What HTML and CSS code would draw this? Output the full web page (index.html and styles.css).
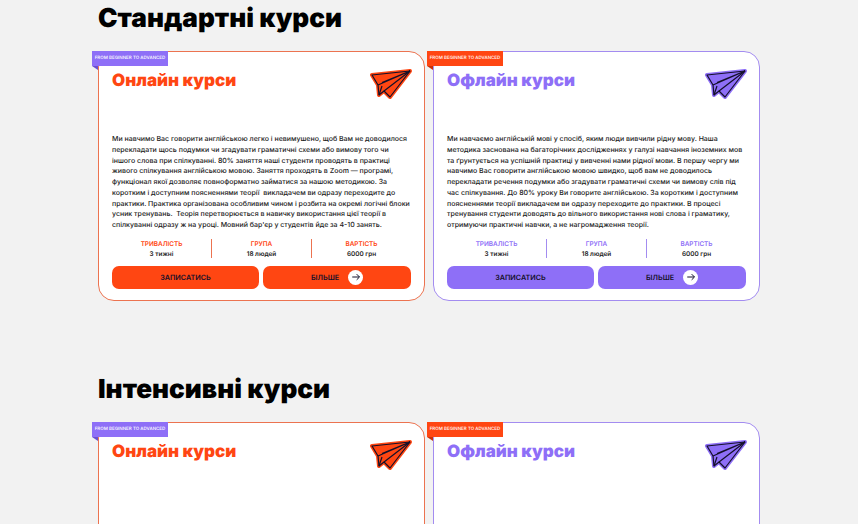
FILE: index.html
```html
<!DOCTYPE html>
<html lang="uk">
<head>
  <meta charset="UTF-8">
  <meta name="viewport" content="width=device-width, initial-scale=1.0">
  <title>Курси англійської</title>
  <link rel="stylesheet" href="styles.css">
</head>
<body>
  <svg class="sprite" xmlns="http://www.w3.org/2000/svg">
    <symbol id="plane" viewBox="0 0 42 30">
      <path class="plane-body" d="M2 6L40 2L20 28L14 22L9 26L8 16Z"></path>
      <path class="plane-lines" d="M2 6L40 2L20 28L14 22L9 26L8 16Z"></path>
      <path class="plane-lines" d="M8 16L40 2M40 2L14 22M40 2L12 13.5M9 26L12 17"></path>
    </symbol>
    <symbol id="arrow" viewBox="0 0 12 12">
      <path d="M1.5 6H10M6.8 2.6L10.2 6L6.8 9.4" fill="none" stroke="currentColor" stroke-width="1.2"></path>
    </symbol>
  </svg>

  <main class="page">
    <section class="courses">
      <h1>Стандартні курси</h1>
      <div class="course-grid">
        <article class="card card-online">
          <span class="ribbon">From beginner to advanced</span>
          <div class="card-head">
            <h2>Онлайн курси</h2>
            <svg class="plane"><use href="#plane"></use></svg>
          </div>
          <p class="card-text">Ми навчимо Вас говорити англійською легко і невимушено, щоб Вам не доводилося<br>перекладати щось подумки чи згадувати граматичні схеми або вимову того чи<br>іншого слова при спілкуванні. 80% заняття наші студенти проводять в практиці<br>живого спілкування англійською мовою. Заняття проходять в Zoom — програмі,<br>функціонал якої дозволяє повноформатно займатися за нашою методикою. За<br>коротким і доступним поясненнями теорії&nbsp; викладачем ви одразу переходите до<br>практики. Практика організована особливим чином і розбита на окремі логічні блоки<br>усник тренувань.&nbsp; Теорія перетворюється в навичку використання цієї теорії в<br>спілкуванні одразу ж на уроці. Мовний бар'єр у студентів йде за 4-10 занять.</p>
          <div class="stats">
            <div class="stat"><span class="stat-label">Тривалість</span><span class="stat-value">3 тижні</span></div>
            <div class="stat"><span class="stat-label">Група</span><span class="stat-value">18 людей</span></div>
            <div class="stat"><span class="stat-label">Вартість</span><span class="stat-value">6000 грн</span></div>
          </div>
          <div class="actions">
            <a class="button" href="#">Записатись</a>
            <a class="button" href="#">Більше <span class="button-icon"><svg><use href="#arrow"></use></svg></span></a>
          </div>
        </article>

        <article class="card card-offline">
          <span class="ribbon">From beginner to advanced</span>
          <div class="card-head">
            <h2>Офлайн курси</h2>
            <svg class="plane"><use href="#plane"></use></svg>
          </div>
          <p class="card-text">Ми навчаємо англійській мові у спосіб, яким люди вивчили рідну мову. Наша<br>методика заснована на багаторічних дослідженнях у галузі навчання іноземних мов<br>та ґрунтується на успішній практиці у вивченні нами рідної мови. В першу чергу ми<br>навчимо Вас говорити англійською мовою швидко, щоб вам не доводилось<br>перекладати речення подумки або згадувати граматичні схеми чи вимову слів під<br>час спілкування. До 80% уроку Ви говорите англійською. За коротким і доступним<br>поясненнями теорії викладачем ви одразу переходите до практики. В процесі<br>тренування студенти доводять до вільного використання нові слова і граматику,<br>отримуючи практичні навчки, а не нагромадження теорії.</p>
          <div class="stats">
            <div class="stat"><span class="stat-label">Тривалість</span><span class="stat-value">3 тижні</span></div>
            <div class="stat"><span class="stat-label">Група</span><span class="stat-value">18 людей</span></div>
            <div class="stat"><span class="stat-label">Вартість</span><span class="stat-value">6000 грн</span></div>
          </div>
          <div class="actions">
            <a class="button" href="#">Записатись</a>
            <a class="button" href="#">Більше <span class="button-icon"><svg><use href="#arrow"></use></svg></span></a>
          </div>
        </article>
      </div>
    </section>

    <section class="courses">
      <h1>Інтенсивні курси</h1>
      <div class="course-grid">
        <article class="card card-online">
          <span class="ribbon">From beginner to advanced</span>
          <div class="card-head">
            <h2>Онлайн курси</h2>
            <svg class="plane"><use href="#plane"></use></svg>
          </div>
        </article>
        <article class="card card-offline">
          <span class="ribbon">From beginner to advanced</span>
          <div class="card-head">
            <h2>Офлайн курси</h2>
            <svg class="plane"><use href="#plane"></use></svg>
          </div>
        </article>
      </div>
    </section>
  </main>
</body>
</html>
```

FILE: styles.css
```css
:root {
  --orange: #ff4612;
  --purple: #8e6ff7;
  --background-color: #f2f2f2;
  --text-color: #222222;
}

html, body {
  height: 524px;
  overflow: hidden;
}

body {
  margin: 0;
  background-color: var(--background-color);
  color: var(--text-color);
  font-family: Inter, "Liberation Sans", sans-serif;
  text-rendering: geometricPrecision;
}

.sprite {
  display: none;
}

.page {
  width: 662px;
  margin-left: 98px;
}

.courses {
  margin-bottom: 70px;
}

h1 {
  margin: 0;
  height: 51px;
  font-size: 26.2px;
  line-height: 37px;
  font-weight: 900;
  color: #000;
}

.course-grid {
  display: grid;
  grid-template-columns: 327px 327px;
  gap: 8px;
}

.card {
  --accent: var(--orange);
  --edge: #ec7350;
  --ribbon: var(--purple);
  --ribbon-fold: #6a4fd0;
  position: relative;
  display: flex;
  flex-direction: column;
  box-sizing: border-box;
  min-height: 250px;
  padding: 17px 13px 11px;
  background-color: #fff;
  border: 1px solid var(--edge);
  border-radius: 16px;
}

.card-offline {
  --accent: var(--purple);
  --edge: #a38cf0;
  --ribbon: var(--orange);
  --ribbon-fold: #c93208;
}

.ribbon {
  position: absolute;
  left: -7px;
  top: -1px;
  box-sizing: border-box;
  width: 76px;
  height: 15px;
  background-color: var(--ribbon);
  color: #fff;
  font-size: 4.5px;
  font-weight: 500;
  line-height: 15px;
  text-align: center;
  text-transform: uppercase;
  white-space: nowrap;
}

/* загин стрічки */
.ribbon:after {
  content: "";
  position: absolute;
  left: 0;
  top: 15px;
  border-top: 4px solid var(--ribbon-fold);
  border-left: 6px solid transparent;
}

.card-head {
  display: flex;
  justify-content: space-between;
  align-items: flex-start;
  height: 65px;
}

h2 {
  margin: 0;
  font-size: 17px;
  line-height: 24px;
  font-weight: 900;
  color: var(--accent);
}

.plane {
  width: 42px;
  height: 30px;
  margin: 0 -1px 0 0;
}

.plane-body {
  fill: var(--accent);
  stroke: var(--accent);
  stroke-width: 4;
  stroke-linejoin: round;
}

.plane-lines {
  fill: none;
  stroke: #14102a;
  stroke-width: 1.2;
  stroke-linejoin: round;
}

.card-text {
  margin: 0;
  font-size: 7px;
  line-height: 10.75px;
  font-weight: 500;
  white-space: nowrap;
}

.stats {
  display: grid;
  grid-template-columns: 99px 100px 1fr;
  margin-top: 8px;
}

.stat {
  display: flex;
  flex-direction: column;
  align-items: center;
  height: 19px;
  border-left: 1px solid var(--edge);
}

.stat:first-child {
  border-left: none;
}

.stat-label {
  font-size: 6.4px;
  line-height: 10px;
  font-weight: 600;
  text-transform: uppercase;
  color: var(--accent);
}

.stat-value {
  font-size: 6.4px;
  line-height: 10px;
  font-weight: 600;
}

.actions {
  display: grid;
  grid-template-columns: 147px 1fr;
  gap: 4px;
  margin-top: 8px;
}

.button {
  display: flex;
  justify-content: center;
  align-items: center;
  gap: 9px;
  height: 23px;
  border-radius: 7px;
  background-color: var(--accent);
  color: #14102a;
  font-size: 7.2px;
  font-weight: 600;
  text-decoration: none;
  text-transform: uppercase;
}

.button-icon {
  display: flex;
  justify-content: center;
  align-items: center;
  width: 15px;
  height: 15px;
  border-radius: 50%;
  background-color: #fff;
}

.button-icon svg {
  width: 10px;
  height: 10px;
}
```
